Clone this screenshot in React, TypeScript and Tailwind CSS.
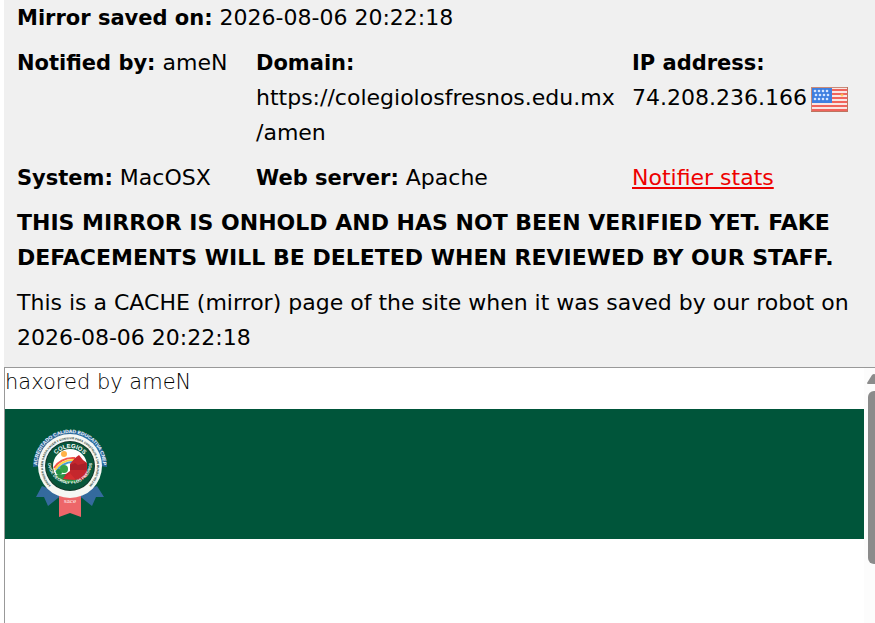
// src/App.tsx

function UsFlag() {
  return (
    <svg viewBox="0 0 37 25" className="inline-block w-[37px] h-[25px] mt-1" role="img" aria-label="United States">
      <rect width="37" height="25" fill="#c98a78" />
      <rect x="1" y="1" width="35" height="23" fill="#f9e6e4" />
      {[2, 6, 10, 14, 18, 22].map((y) => (
        <rect key={y} x="1" y={y} width="35" height="2" fill="#f0645c" />
      ))}
      <rect x="1" y="1" width="20" height="15" fill="#3f7fe0" />
      {[4, 8, 12].map((y, row) =>
        [4, 8, 12, 16].map((x) => (
          <circle key={`${x}-${y}`} cx={x + (row % 2)} cy={y} r="1.3" fill="#d5e5ff" />
        ))
      )}
      <circle cx="31" cy="8" r="1.5" fill="#ffc04a" opacity="0.8" />
      <path d="M0 24.5H37M36.5 0V25" stroke="#bd745f" />
    </svg>
  );
}

function SchoolBadge() {
  return (
    <svg viewBox="0 0 100 110" className="w-[100px] h-[110px]" role="img" aria-label="Colegios">
      <defs>
        <path id="ring-outer" d="M18 54A33 33 0 1 1 82 54" />
        <path id="ring-middle" d="M37 70A27 27 0 1 1 63 70" />
        <path id="ring-top" d="M32 46A18 18 0 0 1 68 46" />
        <path id="ring-bottom" d="M28 42A22 22 0 1 0 72 42" />
        <clipPath id="badge-center">
          <circle cx="50" cy="46" r="17" />
        </clipPath>
      </defs>

      {/* Ribbons */}
      <path d="M22 66L16 77L24 77L28 86L43 74Z" fill="#346a9d" />
      <path d="M77 66L84 77L76 77L72 86L57 74Z" fill="#346a9d" />
      <path d="M39 73H61V97L50 93L39 97Z" fill="#ed6669" />

      {/* Seal */}
      <path d="M13 47A37 37 0 0 1 87 47L80 46A30 30 0 0 0 20 46Z" fill="#2c6a9c" />
      <circle cx="50" cy="46" r="32" fill="#f5f7f4" />
      <circle cx="50" cy="46" r="25" fill="#12372b" />
      <circle cx="50" cy="46" r="24" fill="#07563b" />
      <circle cx="50" cy="46" r="17" fill="#ffffff" />
      <g clipPath="url(#badge-center)">
        <path d="M32 57Q44 51 68 56V65H32Z" fill="#2c9146" />
        <path d="M34 48Q41 37 55 38" fill="none" stroke="#f4584b" strokeWidth="2" />
        <path d="M35 50Q42 39 55 40" fill="none" stroke="#ffd044" strokeWidth="2" />
        <path d="M36 52Q43 41 55 42" fill="none" stroke="#459ad0" strokeWidth="2" />
        <circle cx="44" cy="34" r="3" fill="#ffb247" />
        <circle cx="39" cy="52" r="3" fill="#259447" />
        <circle cx="44" cy="49" r="4" fill="#35a348" />
      </g>
      <path d="M55 38L59 35L63 40L67 43V56L62 60L43 59L46 54L50 51L50 44Z" fill="#c5272d" />
      <path d="M50 45L55 43L58 45L66 43L67 50H50Z" fill="#a91f29" />
      <path d="M43 59L50 53L56 60Z" fill="#d62e31" />
      <g fontFamily="Liberation Sans, sans-serif" fontWeight="700" textAnchor="middle">
        <text fontSize="5" fill="#f2f8fc">
          <textPath href="#ring-outer" startOffset="50%">ACREDITADO CALIDAD EDUCATIVA CNEP</textPath>
        </text>
        <text fontSize="3" fill="#263d34">
          <textPath href="#ring-middle" startOffset="50%">APRENDER A SER SABER HACER Y CONVIVIR PARA CONSTRUIR A UN MUNDO MEJOR</textPath>
        </text>
        <text fontSize="6" fill="#ffffff">
          <textPath href="#ring-top" startOffset="50%">COLEGIOS</textPath>
        </text>
        <text fontSize="4" fill="#ffffff">
          <textPath href="#ring-bottom" startOffset="50%">OVIDE DECROLY Y LOS FRESNOS</textPath>
        </text>
      </g>
      <text x="50" y="83" fontSize="7" fill="#fff3ef" textAnchor="middle" fontFamily="Liberation Serif, serif">sace</text>
    </svg>
  );
}

function MirrorDetails() {
  return (
    <section className="bg-[#f0f0f0] pl-[13px] pr-6 pb-3 flex flex-col gap-[10px]">
      <p><strong className="text-[21px] leading-none">Mirror saved on:</strong> 2026-08-06 20:22:18</p>
      <div className="grid grid-cols-[239px_376px_1fr] gap-y-[10px]">
        <p><strong className="text-[21px] leading-none">Notified by:</strong> ameN</p>
        <p>
          <strong className="text-[21px] leading-none">Domain:</strong>
          <br />
          https://colegiolosfresnos.edu.mx<wbr />/amen
        </p>
        <div>
          <strong className="text-[21px] leading-none">IP address:</strong>
          <p className="flex items-center gap-1 whitespace-nowrap">74.208.236.166 <UsFlag /></p>
        </div>
        <p><strong className="text-[21px] leading-none">System:</strong> MacOSX</p>
        <p><strong className="text-[21px] leading-none">Web server:</strong> Apache</p>
        <p><a href="#stats" className="text-[#ee0000] underline">Notifier stats</a></p>
      </div>
      <p className="font-bold">
        THIS MIRROR IS ONHOLD AND HAS NOT BEEN VERIFIED YET. FAKE DEFACEMENTS WILL BE DELETED WHEN REVIEWED BY OUR STAFF.
      </p>
      <p>This is a CACHE (mirror) page of the site when it was saved by our robot on 2026-08-06 20:22:18</p>
    </section>
  );
}

function MirrorPreview() {
  return (
    <section className="flex grow border-t border-l border-[#999999] bg-white">
      <div className="grow min-w-0">
        <p className="h-[41px] text-[21px] leading-7 font-extralight">haxored by ameN</p>
        <header className="bg-[#00553a] h-[130px] pl-[15px] pt-[11px]">
          <SchoolBadge />
        </header>
      </div>

      {/* Scrollbar */}
      <div className="w-[11px] shrink-0 overflow-hidden bg-[#fcfcfc] pl-[3px] pt-[6px]">
        <svg viewBox="0 0 14 10" className="w-[14px] h-[10px]" aria-hidden="true">
          <path d="M0 9L5 1Q7 -1 9 1L14 9Q14 10 12 10H1Q0 10 0 9Z" fill="#8b8b8b" />
        </svg>
        <div className="mt-[7px] ml-px w-3 h-[173px] rounded-full bg-[#8b8b8b]" />
      </div>
    </section>
  );
}

export default function App() {
  return (
    <main className="min-h-screen flex flex-col pl-1 bg-white text-black text-[22px] leading-[35px] font-['DejaVu_Sans',sans-serif]">
      <MirrorDetails />
      <MirrorPreview />
    </main>
  );
}
